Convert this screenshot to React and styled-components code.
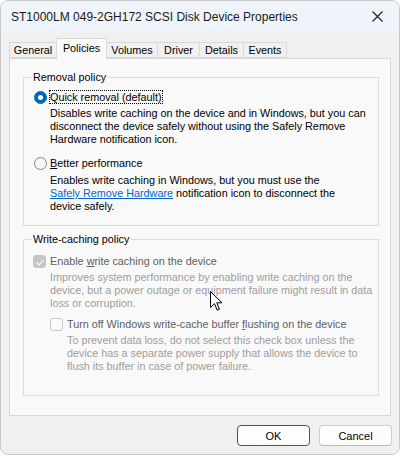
import React from 'react';
import styled, { createGlobalStyle } from 'styled-components';

const GlobalStyle = createGlobalStyle`
  html, body {
    margin: 0;
    padding: 0;
    background: #ffffff;
  }
  body {
    font-family: "Liberation Sans", Arial, sans-serif;
    font-size: 10.8px;
    color: #000;
  }
`;

const tabs = [
  { label: 'General', w: 48 },
  { label: 'Policies', w: 51, active: true },
  { label: 'Volumes', w: 52 },
  { label: 'Driver', w: 43 },
  { label: 'Details', w: 45 },
  { label: 'Events', w: 44 },
];

const Cursor = () => (
  <CursorBox>
    <svg width="13" height="21" viewBox="0 0 13 21">
      <path
        d="M0.5 0.5 L0.5 16.5 L4.5 12.7 L7.2 19.2 L9.4 18.3 L6.8 11.8 L12 11.8 Z"
        fill="#fff"
        stroke="#000"
        strokeWidth="1"
        strokeLinejoin="miter"
      />
    </svg>
  </CursorBox>
);

const CloseIcon = () => (
  <svg width="11" height="11" viewBox="0 0 11 11">
    <path d="M0.5 0.5 L10.5 10.5 M10.5 0.5 L0.5 10.5" stroke="#1a1a1a" strokeWidth="1.1" />
  </svg>
);

const App = () => {
  return (
    <>
      <GlobalStyle />
      <Window>
        <TitleBar>
          <Title>ST1000LM 049-2GH172 SCSI Disk Device Properties</Title>
          <CloseButton><CloseIcon /></CloseButton>
        </TitleBar>
        <Body>
          <TabStrip>
            {tabs.map((t) => (
              <Tab key={t.label} $w={t.w} $active={t.active}>{t.label}</Tab>
            ))}
          </TabStrip>
          <Panel>
            <Group>
              <Legend>Removal policy</Legend>
              <GroupContent $pt={7} $pl={10} $pb={12}>
                <OptionRow $col={16}>
                  <Radio $checked />
                  <Label><Focus>Quick removal (default)</Focus></Label>
                  <Desc>
                    Disables write caching on the device and in Windows, but you can<br />
                    disconnect the device safely without using the Safely Remove<br />
                    Hardware notification icon.
                  </Desc>
                </OptionRow>
                <OptionRow $col={16} $mt={11}>
                  <Radio />
                  <Label><u>B</u>etter performance</Label>
                  <Desc $mt={4}>
                    Enables write caching in Windows, but you must use the<br />
                    <Link>Safely Remove Hardware</Link> notification icon to disconnect the<br />
                    device safely.
                  </Desc>
                </OptionRow>
              </GroupContent>
            </Group>

            <Group $mt={7}>
              <Legend>Write-caching policy</Legend>
              <GroupContent $pt={9} $pl={9} $pb={22}>
                <OptionRow $col={17}>
                  <Check $checked />
                  <Label $disabled>Enable <u>w</u>rite caching on the device</Label>
                  <Desc $disabled>
                    Improves system performance by enabling write caching on the<br />
                    device, but a power outage or equipment failure might result in data<br />
                    loss or corruption.
                  </Desc>
                  <Nested>
                    <OptionRow $col={17}>
                      <Check />
                      <Label $disabled>Turn off Windows write-cache buffer <u>f</u>lushing on the device</Label>
                      <Desc $disabled>
                        To prevent data loss, do not select this check box unless the<br />
                        device has a separate power supply that allows the device to<br />
                        flush its buffer in case of power failure.
                      </Desc>
                    </OptionRow>
                  </Nested>
                </OptionRow>
              </GroupContent>
            </Group>
          </Panel>
          <ButtonRow>
            <Button $default>OK</Button>
            <Button>Cancel</Button>
          </ButtonRow>
        </Body>
        <Cursor />
      </Window>
    </>
  );
};

export default App;

const Window = styled.div`
  position: relative;
  width: 400px;
  height: 455px;
  box-sizing: border-box;
  border: 1px solid #c9c9c9;
  border-radius: 8px;
  overflow: hidden;
  background: #f0f0f0;
  display: flex;
  flex-direction: column;
`;

const TitleBar = styled.div`
  height: 30px;
  flex: none;
  background: #eef4f9;
  display: flex;
  align-items: center;
  justify-content: space-between;
  padding: 0 10px 0 10px;
`;

const Title = styled.div`
  font-size: 12px;
  color: #1a1a1a;
  padding-top: 1px;
`;

const CloseButton = styled.div`
  width: 20px;
  height: 20px;
  display: flex;
  align-items: center;
  justify-content: center;
  margin-right: 2px;
`;

const Body = styled.div`
  flex: 1;
  display: flex;
  flex-direction: column;
  padding: 7px 7px 0 7px;
`;

const TabStrip = styled.div`
  height: 20px;
  display: flex;
  align-items: flex-end;
  padding-left: 1px;
`;

const Tab = styled.div`
  position: relative;
  box-sizing: border-box;
  width: ${(p) => p.$w}px;
  height: ${(p) => (p.$active ? 21 : 16)}px;
  margin-bottom: ${(p) => (p.$active ? -1 : 0)}px;
  margin-left: -1px;
  &:first-child { margin-left: 0; }
  z-index: ${(p) => (p.$active ? 2 : 1)};
  border: 1px solid #d9d9d9;
  border-bottom: ${(p) => (p.$active ? 'none' : '1px solid #d9d9d9')};
  background: ${(p) => (p.$active ? '#f9f9f9' : '#f0f0f0')};
  text-align: center;
  line-height: 13px;
  padding-top: ${(p) => (p.$active ? 3 : 1)}px;
  white-space: nowrap;
`;

const Panel = styled.div`
  box-sizing: border-box;
  height: 358px;
  border: 1px solid #d9d9d9;
  background: #f9f9f9;
  padding: 12px 11px 0 13px;
  margin-right: 1px;
  margin-left: 1px;
`;

const Group = styled.fieldset`
  margin: ${(p) => p.$mt || 0}px 0 0 0;
  padding: 0;
  min-width: 0;
  border: 1px solid #dcdcdc;
`;

const Legend = styled.legend`
  margin-left: 7px;
  padding: 0 2px;
  line-height: 13px;
  color: #000;
`;

const GroupContent = styled.div`
  padding: ${(p) => p.$pt}px 4px ${(p) => p.$pb}px ${(p) => p.$pl}px;
`;

const OptionRow = styled.div`
  display: grid;
  grid-template-columns: ${(p) => p.$col}px 1fr;
  margin-top: ${(p) => p.$mt || 0}px;
  line-height: 13px;
`;

const Label = styled.div`
  color: ${(p) => (p.$disabled ? '#5f5f5f' : '#000')};
  white-space: nowrap;
`;

const Focus = styled.span`
  outline: 1px dotted #000;
  outline-offset: 0px;
`;

const Desc = styled.div`
  grid-column: 2;
  margin-top: ${(p) => p.$mt || 3}px;
  color: ${(p) => (p.$disabled ? '#9d9d9d' : '#000')};
  white-space: nowrap;
`;

const Nested = styled.div`
  grid-column: 2;
  margin-top: 8px;
`;

const Link = styled.span`
  color: #0066cc;
  text-decoration: underline;
`;

const Radio = styled.span`
  box-sizing: border-box;
  width: 13px;
  height: 13px;
  border-radius: 50%;
  background: ${(p) => (p.$checked ? '#0067c0' : '#f6f6f6')};
  border: 1px solid ${(p) => (p.$checked ? '#0067c0' : '#858585')};
  position: relative;
  &::after {
    content: '';
    display: ${(p) => (p.$checked ? 'block' : 'none')};
    position: absolute;
    left: 3px;
    top: 3px;
    width: 5px;
    height: 5px;
    border-radius: 50%;
    background: #fff;
  }
`;

const Check = styled.span`
  box-sizing: border-box;
  width: 13px;
  height: 13px;
  border-radius: 3px;
  background: ${(p) => (p.$checked ? '#c6c6c6' : '#fbfbfb')};
  border: 1px solid #c6c6c6;
  position: relative;
  &::after {
    content: '';
    display: ${(p) => (p.$checked ? 'block' : 'none')};
    position: absolute;
    left: 3.5px;
    top: 1.5px;
    width: 3px;
    height: 6px;
    border: solid #fff;
    border-width: 0 1px 1px 0;
    transform: rotate(45deg);
  }
`;

const ButtonRow = styled.div`
  display: flex;
  justify-content: flex-end;
  gap: 9px;
  margin-top: 9px;
`;

const Button = styled.div`
  box-sizing: border-box;
  width: 73px;
  height: 21px;
  border-radius: 4px;
  background: #fdfdfd;
  border: 1px solid ${(p) => (p.$default ? '#0067c0' : '#d0d0d0')};
  border-bottom-color: ${(p) => (p.$default ? '#0067c0' : '#b8b8b8')};
  display: flex;
  align-items: center;
  justify-content: center;
  font-size: 11px;
  color: #000;
`;

const CursorBox = styled.div`
  position: absolute;
  left: 209px;
  top: 290px;
  width: 13px;
  height: 21px;
  pointer-events: none;
`;
